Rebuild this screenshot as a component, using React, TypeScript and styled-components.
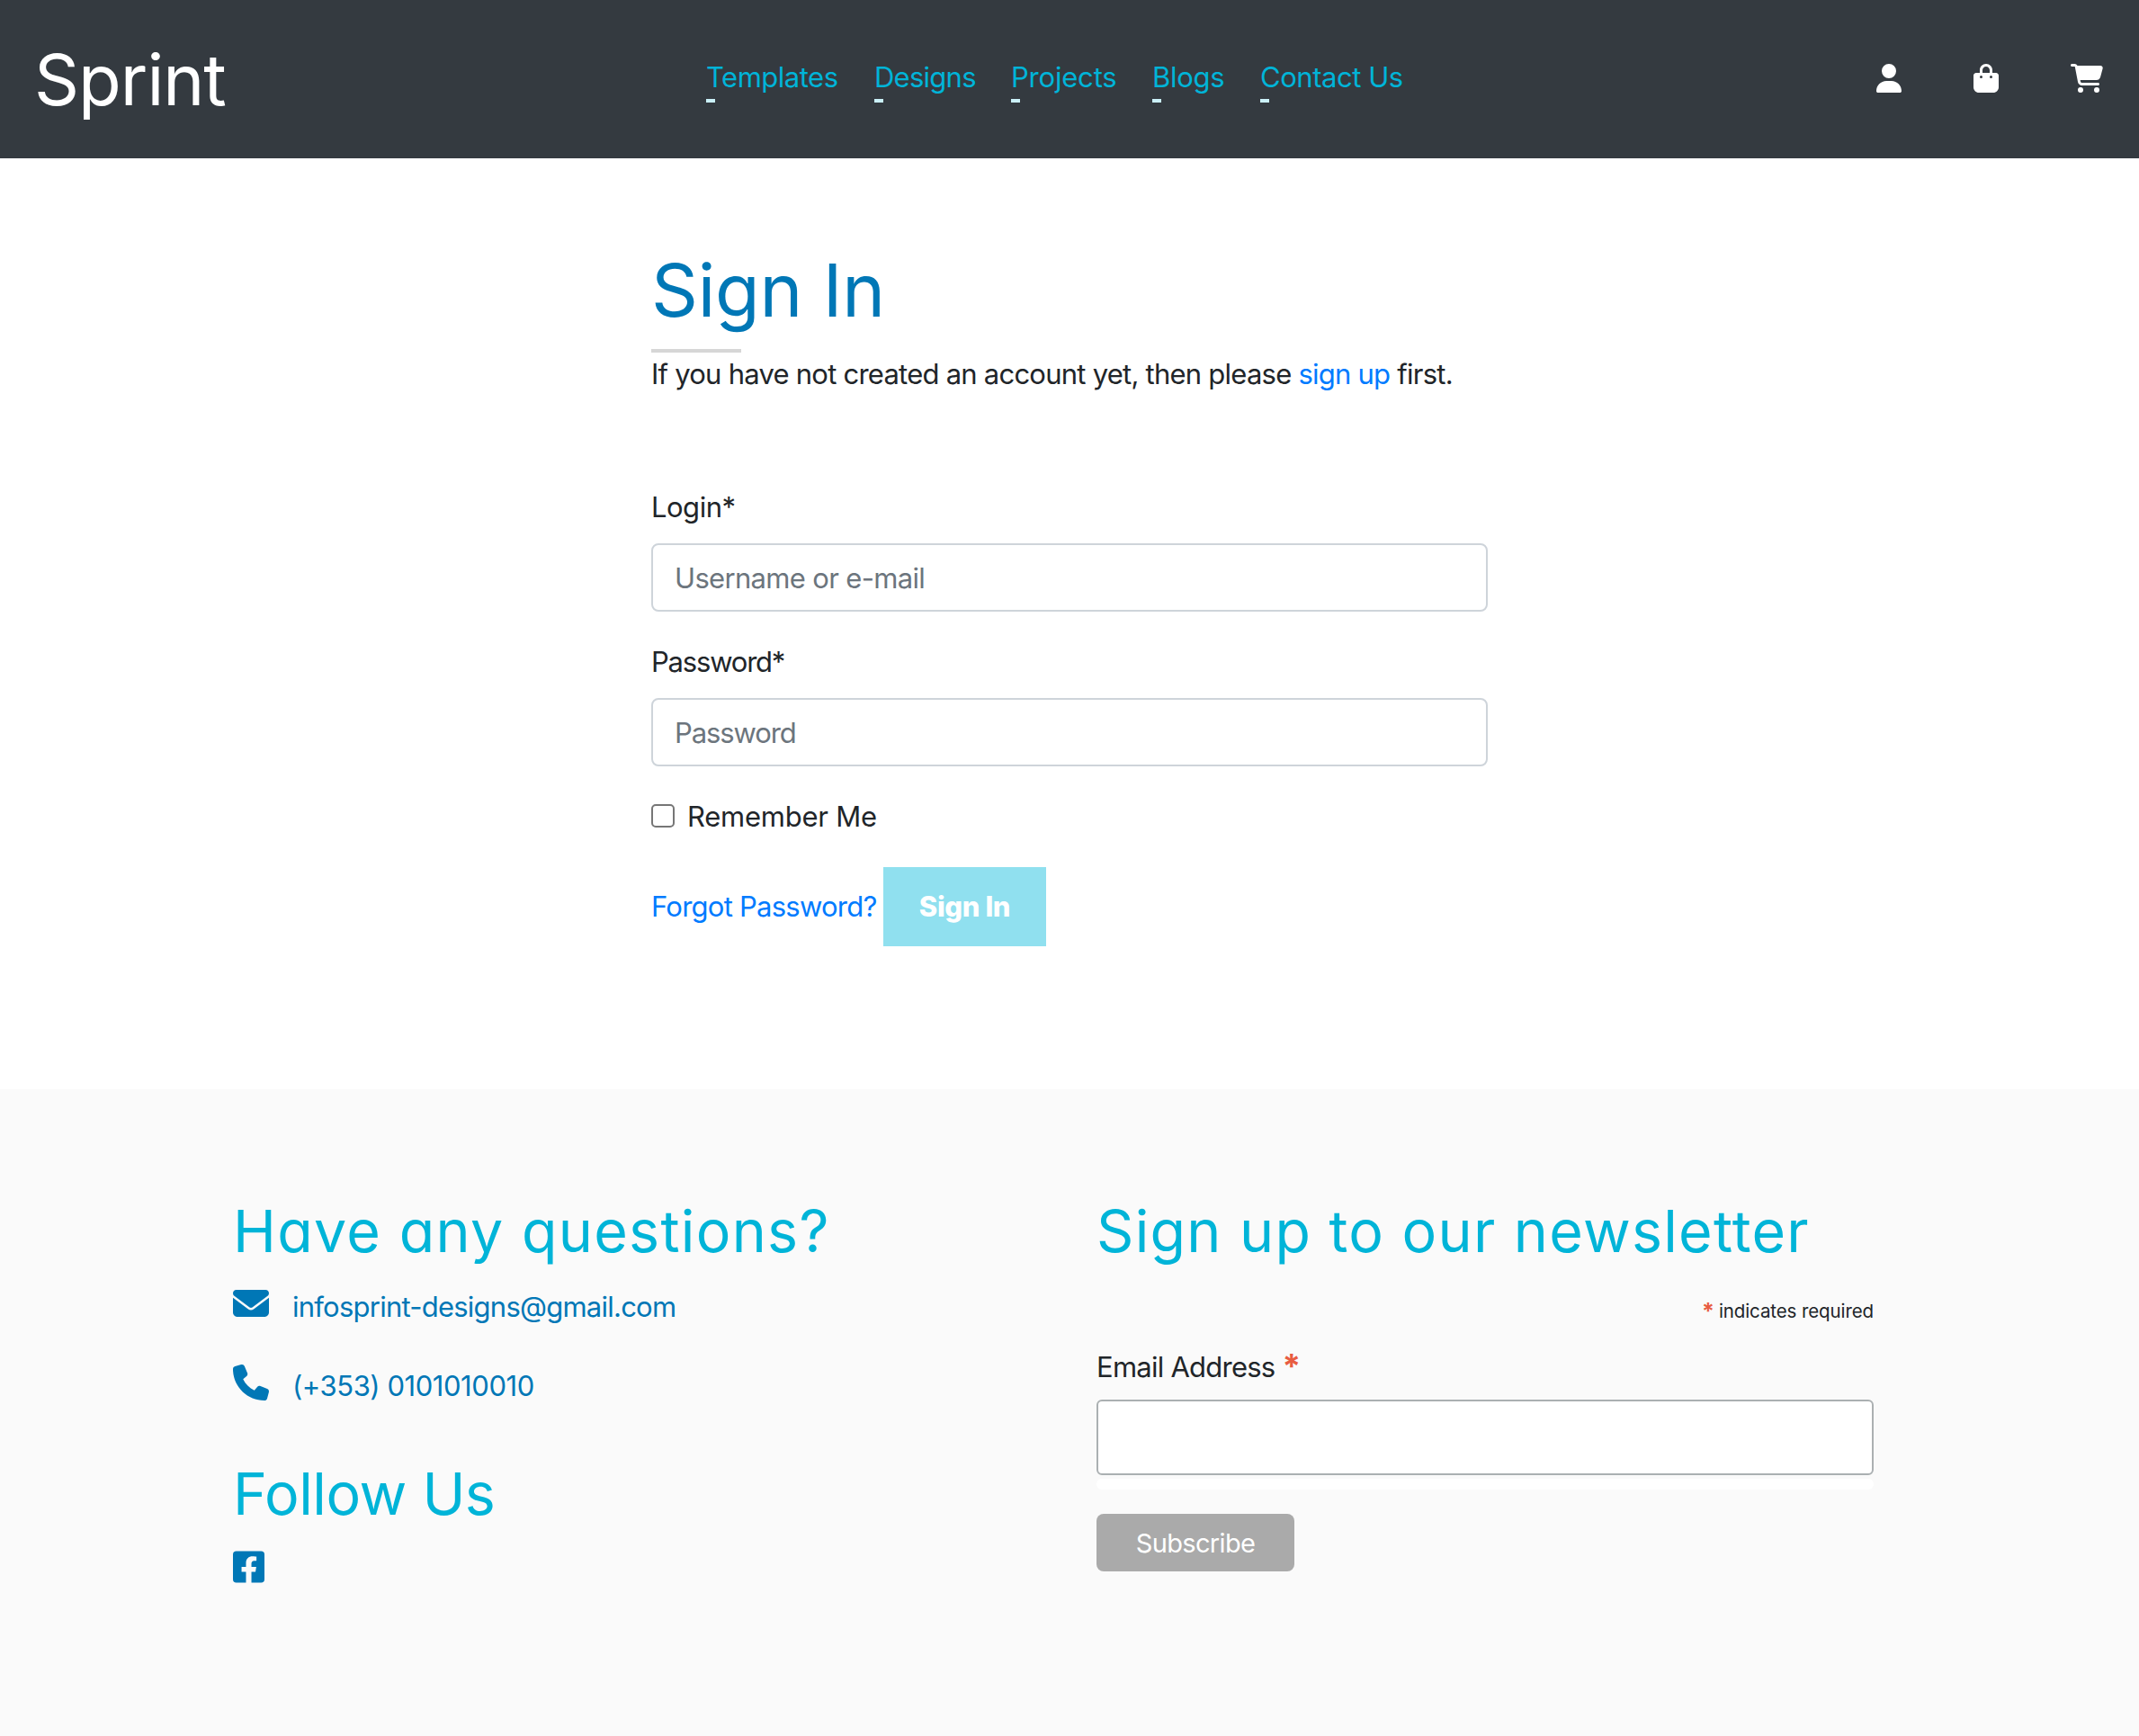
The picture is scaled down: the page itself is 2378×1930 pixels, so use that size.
import React from "react";
import styled, { createGlobalStyle } from "styled-components";
import { FaUser, FaBagShopping, FaCartShopping, FaEnvelope, FaPhone } from "react-icons/fa6";
import { FaFacebookSquare } from "react-icons/fa";

const GlobalStyle = createGlobalStyle`
  *, *::before, *::after { box-sizing: border-box; }
  body {
    margin: 0;
    background: #fff;
    color: #212529;
    font-family: Inter, "Liberation Sans", sans-serif;
    font-size: 31px;
    line-height: 48px;
  }
  h1, h2, p { margin: 0; font-weight: 400; }
  a { text-decoration: none; }
  input, button { font: inherit; }
`;

/* Each run of text carries its own tracking, in px. */
const Tracked = styled.span<{ $ls?: number }>`
  letter-spacing: ${({ $ls = 0 }) => $ls}px;
  white-space: nowrap;
`;

const Header = styled.header`
  display: grid;
  grid-template-columns: 785px 1fr auto;
  align-items: start;
  height: 176px;
  background: #343a40;
`;

const Logo = styled.a`
  padding: 41px 0 0 38px;
  color: #fff;
  font-size: 78px;
  line-height: 96px;
`;

const Nav = styled.nav`
  display: flex;
  gap: 40px;
  padding-top: 62px;
`;

const NavLink = styled.a<{ $w: number }>`
  width: ${({ $w }) => $w}px;
  color: #00b4d8;
  &::after {
    content: "";
    display: block;
    width: 10px;
    height: 4px;
    background: #caf0f8;
  }
`;

const Actions = styled.div`
  display: flex;
  gap: 80px;
  padding: 71px 40px 0 0;
`;

const Action = styled.a<{ $w: number }>`
  display: flex;
  color: #fff;
  svg { width: ${({ $w }) => $w}px; height: 32px; }
`;

const Main = styled.main`
  width: 930px;
  height: 1035px;
  margin: 0 auto;
  padding-top: 100px;
`;

const Title = styled.h1`
  padding-bottom: 1px;
  color: #0077b6;
  font-size: 81px;
  line-height: 95px;
  font-feature-settings: "cv11";
`;

const Rule = styled.hr`
  width: 100px;
  height: 4px;
  margin: 16px 0 0;
  border: 0;
  background: #d6d6d6;
`;

const Link = styled.a`
  color: #007bff;
`;

const Form = styled.form`
  display: flex;
  flex-direction: column;
  gap: 32px;
  margin-top: 100px;
`;

const Field = styled.label`
  display: flex;
  flex-direction: column;
  gap: 16px;
`;

const Input = styled.input<{ $ls?: number }>`
  width: 100%;
  height: 76px;
  padding: 0 24px;
  border: 2px solid #ced4da;
  border-radius: 8px;
  background: #fff;
  letter-spacing: ${({ $ls = 0 }) => $ls}px;
  &::placeholder { color: #6c757d; opacity: 1; }
`;

const Remember = styled.label`
  display: flex;
  align-items: center;
  gap: 14px;
  height: 48px;
`;

const Checkbox = styled.input`
  appearance: none;
  width: 26px;
  height: 26px;
  margin: 0 0 2px;
  border: 2px solid #767676;
  border-radius: 5px;
  background: #fff;
`;

const Submit = styled.div`
  display: flex;
  align-items: center;
  a { width: 258px; }
`;

const SignInButton = styled.button`
  width: 181px;
  height: 88px;
  padding: 0;
  border: 0;
  background: #90e0ef;
  color: #fff;
  font-weight: 800;
`;

const Footer = styled.footer`
  display: grid;
  grid-template-columns: 960px 864px;
  height: 719px;
  padding: 121px 0 0 259px;
  background: #fafafa;
`;

const Heading = styled.h2`
  padding-bottom: 1px;
  color: #00b4d8;
  font-size: 64.5px;
  line-height: 75px;
  font-feature-settings: "cv11";
`;

const Contacts = styled.div`
  display: flex;
  flex-direction: column;
  gap: 40px;
  margin: 21px 0 59px;
`;

const Contact = styled.a`
  display: flex;
  gap: 26px;
  height: 48px;
  color: #0077b6;
  svg { width: 40px; height: 40px; }
`;

const Social = styled.a`
  display: flex;
  margin-top: 22px;
  color: #0077b6;
  svg { width: 35px; height: 40px; }
`;

const Star = styled.span<{ $size: number; $line: number }>`
  color: #e85c41;
  font-size: ${({ $size }) => $size}px;
  font-weight: 700;
  line-height: ${({ $line }) => $line}px;
`;

const Required = styled.div`
  display: flex;
  justify-content: flex-end;
  gap: 5px;
  height: 32px;
  margin-top: 34px;
  font-size: 20.5px;
  line-height: 32px;
`;

const EmailLabel = styled.div`
  display: flex;
  gap: 8px;
  height: 48px;
  margin-top: 22px;
`;

const EmailInput = styled.input`
  display: block;
  width: 100%;
  height: 84px;
  margin-top: 12px;
  border: 2px solid #abb0b2;
  border-radius: 6px;
  background: #fff;
`;

const Response = styled.div`
  height: 12px;
  margin-top: 4px;
  border-radius: 6px;
  background: #fff;
`;

const Subscribe = styled.button`
  display: block;
  width: 220px;
  height: 64px;
  margin-top: 27px;
  padding: 2px 0 0;
  border: 0;
  border-radius: 8px;
  background: #aaa;
  color: #fff;
  font-size: 29px;
`;

const links = [
  { label: "Templates", w: 147, ls: -0.5 },
  { label: "Designs", w: 112, ls: -0.75 },
  { label: "Projects", w: 117, ls: -0.2 },
  { label: "Blogs", w: 80, ls: -0.3 },
  { label: "Contact Us", w: 160, ls: -0.45 },
];

export default function App() {
  return (
    <>
      <GlobalStyle />
      <Header>
        <Logo><Tracked $ls={-1}>Sprint</Tracked></Logo>
        <Nav>
          {links.map((l) => (
            <NavLink key={l.label} $w={l.w}><Tracked $ls={l.ls}>{l.label}</Tracked></NavLink>
          ))}
        </Nav>
        <Actions>
          <Action $w={28}><FaUser /></Action>
          <Action $w={28}><FaBagShopping /></Action>
          <Action $w={36}><FaCartShopping /></Action>
        </Actions>
      </Header>
      <Main>
        <Title><Tracked $ls={-0.25}>Sign In</Tracked></Title>
        <Rule />
        <p>
          <Tracked $ls={-0.76}>
            If you have not created an account yet, then please <Link>sign up</Link> first.
          </Tracked>
        </p>
        <Form>
          <Field>
            <Tracked $ls={-0.5}>Login*</Tracked>
            <Input $ls={-0.67} placeholder="Username or e-mail" />
          </Field>
          <Field>
            <Tracked $ls={-1.2}>Password*</Tracked>
            <Input $ls={-1.1} type="password" placeholder="Password" />
          </Field>
          <Remember>
            <Checkbox type="checkbox" />
            <Tracked $ls={-0.25}>Remember Me</Tracked>
          </Remember>
          <Submit>
            <Link><Tracked $ls={-0.75}>Forgot Password?</Tracked></Link>
            <SignInButton type="button"><Tracked $ls={-0.4}>Sign In</Tracked></SignInButton>
          </Submit>
        </Form>
      </Main>
      <Footer>
        <div>
          <Heading><Tracked $ls={1.3}>Have any questions?</Tracked></Heading>
          <Contacts>
            <Contact><FaEnvelope /><Tracked $ls={-0.76}>infosprint-designs@gmail.com</Tracked></Contact>
            <Contact><FaPhone /><Tracked $ls={-0.45}>(+353) 0101010010</Tracked></Contact>
          </Contacts>
          <Heading><Tracked $ls={-0.5}>Follow Us</Tracked></Heading>
          <Social><FaFacebookSquare /></Social>
        </div>
        <div>
          <Heading><Tracked $ls={1.25}>Sign up to our newsletter</Tracked></Heading>
          <Required>
            <Star $size={25} $line={32}>*</Star>
            <Tracked $ls={-0.1}>indicates required</Tracked>
          </Required>
          <EmailLabel>
            <Tracked $ls={-0.75}>Email Address</Tracked>
            <Star $size={37} $line={46}>*</Star>
          </EmailLabel>
          <EmailInput />
          <Response />
          <Subscribe type="button"><Tracked $ls={-0.65}>Subscribe</Tracked></Subscribe>
        </div>
      </Footer>
    </>
  );
}
